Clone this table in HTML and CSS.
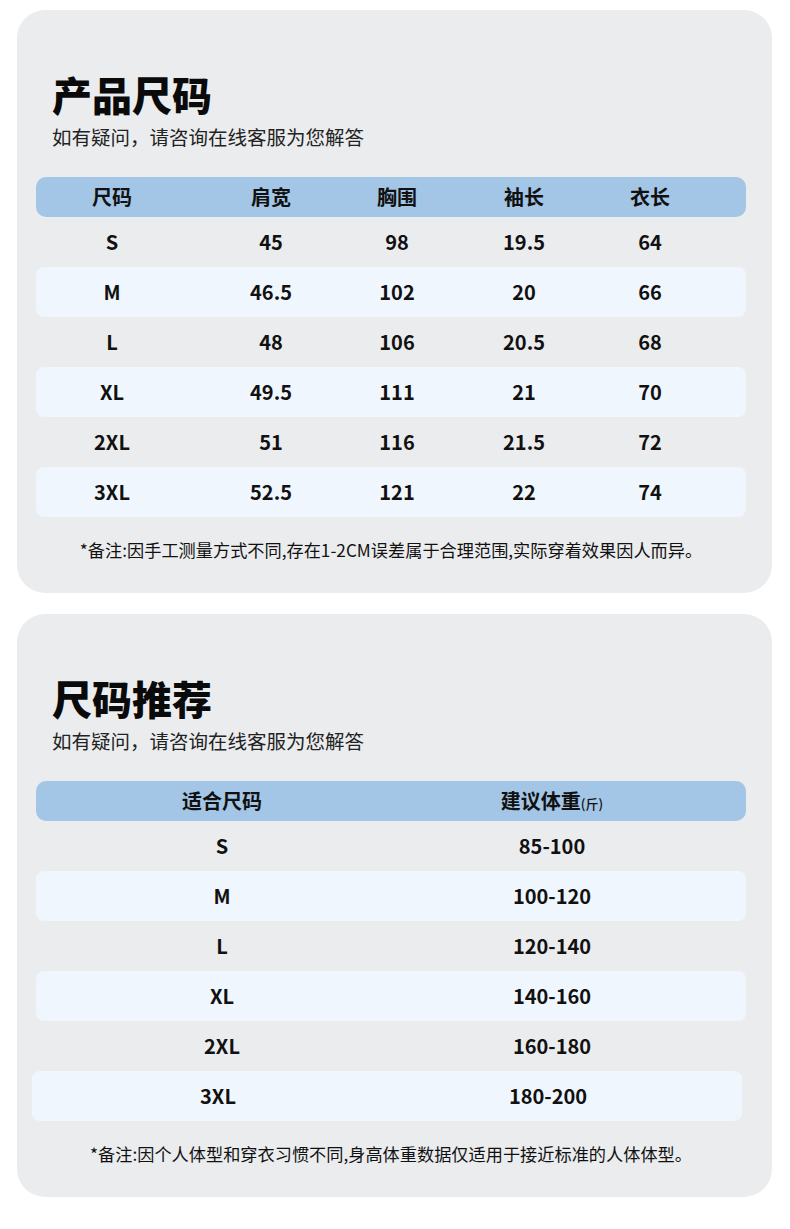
FILE: index.html
```html
<!DOCTYPE html>
<html lang="zh-CN">
<head>
<meta charset="utf-8">
<title>产品尺码</title>
<link rel="stylesheet" href="styles.css">
</head>
<body>
<div class="page">
  <section class="card">
    <h1 class="title">产品尺码</h1>
    <p class="sub">如有疑问，请咨询在线客服为您解答</p>
    <div class="table t5">
      <div class="row head"><span>尺码</span><span>肩宽</span><span>胸围</span><span>袖长</span><span>衣长</span></div>
      <div class="row"><span>S</span><span>45</span><span>98</span><span>19.5</span><span>64</span></div>
      <div class="row band"><span>M</span><span>46.5</span><span>102</span><span>20</span><span>66</span></div>
      <div class="row"><span>L</span><span>48</span><span>106</span><span>20.5</span><span>68</span></div>
      <div class="row band"><span>XL</span><span>49.5</span><span>111</span><span>21</span><span>70</span></div>
      <div class="row"><span>2XL</span><span>51</span><span>116</span><span>21.5</span><span>72</span></div>
      <div class="row band"><span>3XL</span><span>52.5</span><span>121</span><span>22</span><span>74</span></div>
    </div>
    <p class="note">*备注:因手工测量方式不同,存在1-2CM误差属于合理范围,实际穿着效果因人而异。</p>
  </section>

  <section class="card">
    <h1 class="title">尺码推荐</h1>
    <p class="sub">如有疑问，请咨询在线客服为您解答</p>
    <div class="table t2">
      <div class="row head"><span>适合尺码</span><span>建议体重<small class="unit">(斤)</small></span></div>
      <div class="row"><span>S</span><span>85-100</span></div>
      <div class="row band"><span>M</span><span>100-120</span></div>
      <div class="row"><span>L</span><span>120-140</span></div>
      <div class="row band"><span>XL</span><span>140-160</span></div>
      <div class="row"><span>2XL</span><span>160-180</span></div>
      <div class="row band shifted"><span>3XL</span><span>180-200</span></div>
    </div>
    <p class="note">*备注:因个人体型和穿衣习惯不同,身高体重数据仅适用于接近标准的人体体型。</p>
  </section>
</div>
</body>
</html>
```

FILE: styles.css
```css
html, body {
  margin: 0;
  padding: 0;
  background: #ffffff;
}

body {
  font-family: "Noto Sans CJK SC", "Noto Sans", sans-serif;
  color: #111111;
}

.page {
  display: flex;
  flex-direction: column;
  gap: 21px;
  padding: 10px 18px 0 17px;
}

.card {
  width: 755px;
  box-sizing: border-box;
  background: #ebecee;
  border-radius: 28px;
  padding: 62px 26px 31px 19px;
}

.title {
  margin: 0 0 0 16px;
  font-size: 40px;
  line-height: 44px;
  font-weight: 900;
  color: #0a0a0a;
}

.sub {
  margin: 9px 0 0 16px;
  font-size: 19.5px;
  line-height: 24px;
  font-weight: 400;
  color: #222222;
}

.table {
  margin-top: 28px;
  display: flex;
  flex-direction: column;
}

.row {
  display: grid;
  height: 50px;
  align-items: center;
  justify-items: center;
  font-size: 20px;
  font-weight: 700;
  color: #111111;
  border-radius: 8px;
}

.t5 .row {
  grid-template-columns: 152px 166px 86px 168px 84px auto;
}

.t2 .row {
  grid-template-columns: 372px 288px auto;
}

.row span {
  white-space: nowrap;
  line-height: 1;
}

.row.head {
  height: 40px;
  background: #a3c5e6;
  border-radius: 10px;
  font-weight: 700;
}

.row.band {
  background: #f0f6fd;
}

.row.shifted {
  margin: 0 4px 0 -4px;
}

.unit {
  font-size: 13px;
  font-weight: 500;
}

.note {
  margin: 21px 0 0 0;
  text-align: center;
  font-size: 17.2px;
  line-height: 24px;
  font-weight: 400;
  color: #111111;
}
```
